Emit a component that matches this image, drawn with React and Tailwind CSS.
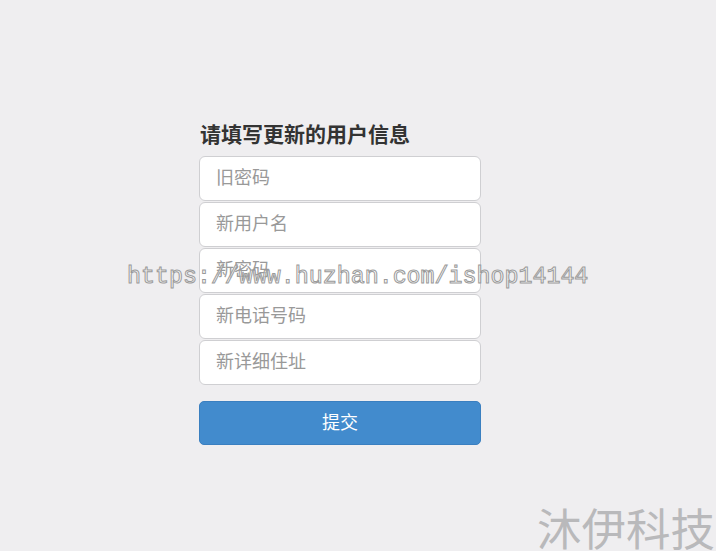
export default function App() {
  const fields = ['旧密码', '新用户名', '新密码', '新电话号码', '新详细住址'];

  return (
    <div className="relative w-[716px] h-[551px] overflow-hidden bg-[#efeef0] font-['Liberation_Sans','Noto_Sans_CJK_SC',sans-serif]">
      <div className="pt-[120px] pl-[199px]">
        <form className="w-[282px]" onSubmit={(e) => e.preventDefault()}>
          <h2 className="text-[21px] leading-[30px] font-bold text-[#333] mb-[6px] pl-px">请填写更新的用户信息</h2>
          <div className="flex flex-col gap-px">
            {fields.map((f) => (
              <input
                key={f}
                type="text"
                placeholder={f}
                className="h-[45px] w-full rounded-[6px] border border-[#cfcfd2] bg-white px-[16px] text-[18px] text-[#555] placeholder:text-[#999] outline-none"
              />
            ))}
          </div>
          <button
            type="submit"
            className="mt-[16px] h-[44px] w-full rounded-[5px] border border-[#3a7fc0] bg-[#428bcd] text-[18px] text-white"
          >
            提交
          </button>
        </form>
      </div>

      {/* watermark */}
      <div className="absolute left-[127px] top-[261px] pointer-events-none font-['Liberation_Mono',monospace] text-[23.3px] leading-[32px] text-[rgba(255,255,255,0.55)] [-webkit-text-stroke:1px_#9a9a9a]">
        https://www.huzhan.com/ishop14144
      </div>
      <div className="absolute left-[537px] top-[504px] pointer-events-none text-[44.5px] leading-[54px] text-[#b9b9bb] tracking-[0px]">
        沐伊科技
      </div>
    </div>
  );
}
